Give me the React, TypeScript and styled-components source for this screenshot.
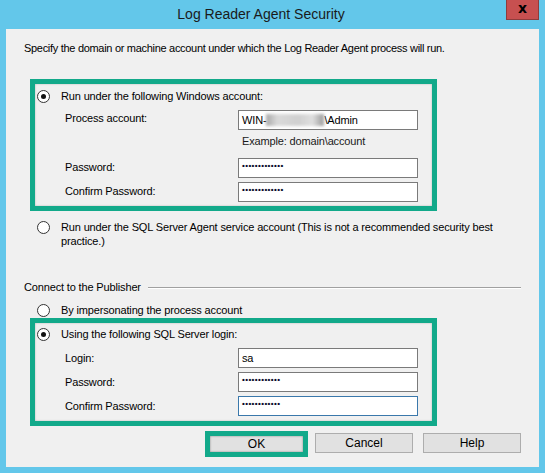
import React from "react";
import styled, { createGlobalStyle } from "styled-components";

const GlobalStyle = createGlobalStyle`
  html, body {
    margin: 0;
    padding: 0;
    background: #63c7ea;
  }
  * {
    box-sizing: border-box;
  }
`;

const ACCENT = "#12a98a";

const Window = styled.div`
  width: 545px;
  height: 473px;
  background: #63c7ea;
  display: flex;
  flex-direction: column;
  padding: 0 6px 6px 6px;
  font-family: "Liberation Sans", Arial, sans-serif;
  font-size: 11px;
  color: #000;
`;

const TitleBar = styled.div`
  height: 29px;
  display: flex;
  align-items: flex-start;
`;

const Title = styled.div`
  flex: 1;
  text-align: center;
  font-size: 14px;
  line-height: 29px;
  padding-left: 10px;
  color: #1a1a1a;
`;

const CloseButton = styled.div`
  width: 33px;
  height: 20px;
  background: #c75050;
  border: 1px solid #8e3c3c;
  border-top: none;
  display: flex;
  align-items: center;
  justify-content: center;
  font-family: "DejaVu Sans", sans-serif;
  font-size: 14px;
  font-weight: bold;
  line-height: 1;
  color: #000;
  padding-bottom: 3px;
`;

const Client = styled.div`
  flex: 1;
  background: #f0f0f0;
  display: flex;
  flex-direction: column;
  padding-top: 12px;
  letter-spacing: -0.15px;
`;

const Intro = styled.div`
  margin-left: 18px;
  line-height: 14px;
  letter-spacing: -0.3px;
`;

const Highlight = styled.div<{ $top: number; $pad: string }>`
  margin: ${(p) => p.$top}px 0 0 24px;
  width: 407px;
  border: 5px solid ${ACCENT};
  padding: ${(p) => p.$pad};
  box-shadow: inset 0 0 2px rgba(0, 0, 0, 0.28);
  display: flex;
  flex-direction: column;
`;

const RadioRow = styled.div<{ $top?: number; $left?: number }>`
  display: flex;
  align-items: flex-start;
  gap: 11px;
  margin-top: ${(p) => p.$top ?? 0}px;
  margin-left: ${(p) => p.$left ?? 0}px;
  line-height: 14px;
`;

const RadioCircle = styled.span<{ $checked?: boolean }>`
  flex: none;
  width: 13px;
  height: 13px;
  margin-top: 1px;
  border-radius: 50%;
  border: 1px solid #333;
  background: #fff;
  display: flex;
  align-items: center;
  justify-content: center;
  &::after {
    content: "";
    width: 5px;
    height: 5px;
    border-radius: 50%;
    background: ${(p) => (p.$checked ? "#111" : "transparent")};
  }
`;

const FieldRow = styled.div<{ $top: number }>`
  display: flex;
  align-items: center;
  margin: ${(p) => p.$top}px 0 0 28px;
  height: 20px;
`;

const Label = styled.div<{ $raise?: number }>`
  width: 173px;
  line-height: 14px;
  padding-bottom: ${(p) => (p.$raise ?? 0) * 2}px;
`;

const Field = styled.div<{ $focused?: boolean }>`
  width: 180px;
  height: 20px;
  background: #fff;
  border: 1px solid ${(p) => (p.$focused ? "#3a78ab" : "#7a7a7a")};
  display: flex;
  align-items: center;
  padding-left: 3px;
  white-space: nowrap;
`;

const Dots = styled.span`
  font-size: 8px;
  font-weight: bold;
  letter-spacing: 0.4px;
  line-height: 1;
  margin-top: -5px;
  color: #0a0a2a;
`;

const Blurred = styled.span`
  display: inline-block;
  width: 58px;
  height: 12px;
  background: linear-gradient(90deg, #9a9a9a 0%, #d4d4d4 20%, #c8c8c8 55%, #dadada 80%, #8a8a8a 100%);
  filter: blur(1.5px);
  opacity: 0.85;
`;

const Hint = styled.div`
  margin: 4px 0 0 205px;
  line-height: 14px;
  color: #1a1a1a;
`;

const SectionHeader = styled.div`
  display: flex;
  align-items: center;
  gap: 7px;
  margin: 32px 18px 0 18px;
  line-height: 14px;
  &::after {
    content: "";
    flex: 1;
    height: 1px;
    background: #a0a0a0;
    box-shadow: 0 1px 0 #fff;
  }
`;

const ButtonRow = styled.div`
  display: flex;
  justify-content: flex-end;
  align-items: flex-start;
  margin-top: 5px;
  padding-right: 18px;
`;

const Button = styled.div<{ $gap?: number }>`
  width: 98px;
  height: 20px;
  margin-left: ${(p) => p.$gap ?? 0}px;
  margin-top: 2px;
  background: #e1e1e1;
  border: 1px solid #adadad;
  display: flex;
  align-items: center;
  justify-content: center;
  font-size: 12px;
  letter-spacing: 0;
`;

const OkFrame = styled.div`
  width: 103px;
  height: 26px;
  border: 5px solid ${ACCENT};
  background: #e1e1e1;
  box-shadow: inset 0 0 2px rgba(0, 0, 0, 0.45);
  display: flex;
  align-items: center;
  justify-content: center;
  font-size: 12px;
  letter-spacing: 0;
`;

const DOTS13 = "•••••••••••••";
const DOTS12 = "••••••••••••";

const App: React.FC = () => {
  return (
    <>
      <GlobalStyle />
      <Window>
        <TitleBar>
          <Title>Log Reader Agent Security</Title>
          <CloseButton>x</CloseButton>
        </TitleBar>
        <Client>
          <Intro>
            Specify the domain or machine account under which the Log Reader Agent process will run.
          </Intro>

          <Highlight $top={24} $pad="5px 0 4px 2px">
            <RadioRow>
              <RadioCircle $checked />
              <span>Run under the following Windows account:</span>
            </RadioRow>
            <FieldRow $top={7}>
              <Label $raise={2}>Process account:</Label>
              <Field>
                WIN-
                <Blurred />
                \Admin
              </Field>
            </FieldRow>
            <Hint>Example: domain\account</Hint>
            <FieldRow $top={10}>
              <Label $raise={1}>Password:</Label>
              <Field>
                <Dots>{DOTS13}</Dots>
              </Field>
            </FieldRow>
            <FieldRow $top={4}>
              <Label $raise={1}>Confirm Password:</Label>
              <Field>
                <Dots>{DOTS13}</Dots>
              </Field>
            </FieldRow>
          </Highlight>

          <RadioRow $top={9} $left={31}>
            <RadioCircle />
            <span>
              Run under the SQL Server Agent service account (This is not a recommended security best
              <br />
              practice.)
            </span>
          </RadioRow>

          <SectionHeader>Connect to the Publisher</SectionHeader>

          <RadioRow $top={9} $left={31}>
            <RadioCircle />
            <span>By impersonating the process account</span>
          </RadioRow>

          <Highlight $top={1} $pad="4px 0 5px 2px">
            <RadioRow>
              <RadioCircle $checked />
              <span>Using the following SQL Server login:</span>
            </RadioRow>
            <FieldRow $top={7}>
              <Label>Login:</Label>
              <Field>sa</Field>
            </FieldRow>
            <FieldRow $top={4}>
              <Label>Password:</Label>
              <Field>
                <Dots>{DOTS12}</Dots>
              </Field>
            </FieldRow>
            <FieldRow $top={4}>
              <Label>Confirm Password:</Label>
              <Field $focused>
                <Dots>{DOTS12}</Dots>
              </Field>
            </FieldRow>
          </Highlight>

          <ButtonRow>
            <OkFrame>OK</OkFrame>
            <Button $gap={7}>Cancel</Button>
            <Button $gap={10}>Help</Button>
          </ButtonRow>
        </Client>
      </Window>
    </>
  );
};

export default App;
